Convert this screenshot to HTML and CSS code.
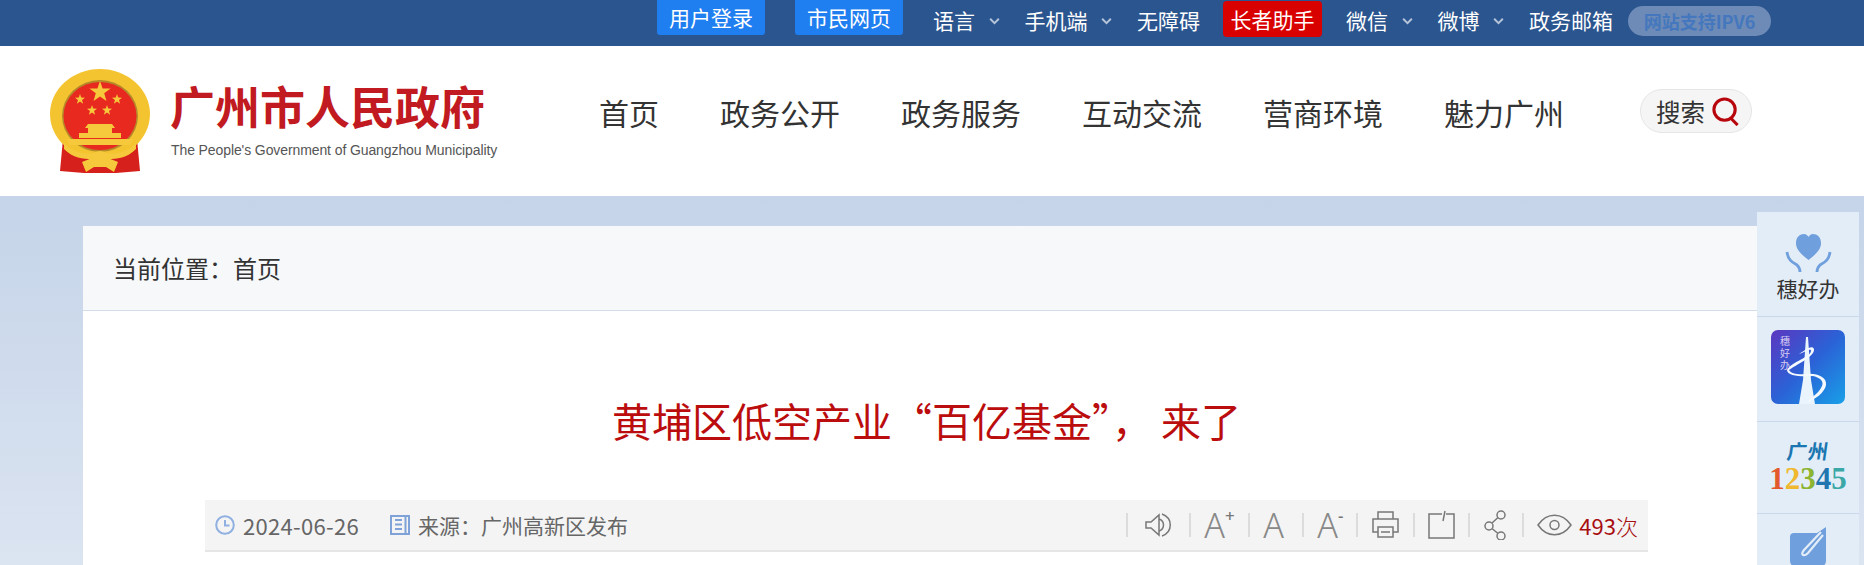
FILE: index.html
```html
<!DOCTYPE html>
<html lang="zh-CN">

<head>
    <meta charset="UTF-8">
    <title>黄埔区低空产业“百亿基金”，来了</title>
    <link rel="stylesheet" href="styles.css">
</head>

<body>
    <div class="topbar">
        <a class="top-btn">用户登录</a>
        <a class="top-btn">市民网页</a>
        <a class="top-link has-caret">语言<svg class="caret" viewBox="0 0 12 8"><path d="M2 1.5 6 5.5 10 1.5"/></svg></a>
        <a class="top-link has-caret">手机端<svg class="caret" viewBox="0 0 12 8"><path d="M2 1.5 6 5.5 10 1.5"/></svg></a>
        <a class="top-link">无障碍</a>
        <a class="top-help">长者助手</a>
        <a class="top-link has-caret">微信<svg class="caret" viewBox="0 0 12 8"><path d="M2 1.5 6 5.5 10 1.5"/></svg></a>
        <a class="top-link has-caret">微博<svg class="caret" viewBox="0 0 12 8"><path d="M2 1.5 6 5.5 10 1.5"/></svg></a>
        <a class="top-link">政务邮箱</a>
        <span class="top-pill">网站支持IPV6</span>
    </div>

    <header class="header">
        <div class="logo">
            <svg class="emblem" viewBox="0 0 100 105">
                <path class="ribbon" d="M13 70 L30 84 L42 90 L58 90 L70 84 L87 70 L90 102 L66 104 L34 104 L10 102Z"/>
                <ellipse class="ring" cx="50" cy="45" rx="50" ry="45"/>
                <ellipse class="ring-line" cx="50" cy="47" rx="38" ry="36"/>
                <ellipse class="disc" cx="50" cy="47" rx="36.500" ry="34"/>
                <g class="gold">
                    <path d="M50 12 52.6 19.4 60.5 19.6 54.2 24.3 56.5 31.9 50 27.4 43.5 31.9 45.8 24.3 39.5 19.6 47.4 19.4Z"/>
                    <path d="M30 25 31.2 28.6 35 28.7 32 31 33.1 34.7 30 32.5 26.9 34.7 28 31 25 28.7 28.8 28.6Z"/>
                    <path d="M67 25 68.2 28.6 72 28.7 69 31 70.1 34.7 67 32.5 63.9 34.7 65 31 62 28.7 65.8 28.6Z"/>
                    <path d="M42 36 43.2 39.6 47 39.7 44 42 45.1 45.7 42 43.5 38.9 45.7 40 42 37 39.7 40.8 39.6Z"/>
                    <path d="M57 36 58.2 39.6 62 39.7 59 42 60.1 45.7 57 43.5 53.9 45.7 55 42 52 39.7 55.8 39.6Z"/>
                    <path d="M38 55H62L65 59H62V64H71V69H29V64H38V59H35Z"/>
                    <path d="M17 70H83L80 76H20Z"/>
                    <path d="M14 74C28 88 40 84 50 84C60 84 72 88 86 74L86 80C74 92 60 90 50 90C40 90 26 92 14 80Z"/>
                    <path d="M50 82C56 82 59 86 58 89L68 93 64 103 56 98H44L36 103 32 93 42 89C41 86 44 82 50 82Z"/>
                </g>
            </svg>
            <div class="logo-text">
                <div class="logo-cn">广州市人民政府</div>
                <div class="logo-en">The People's Government of Guangzhou Municipality</div>
            </div>
        </div>
        <nav class="nav">
            <a>首页</a>
            <a>政务公开</a>
            <a>政务服务</a>
            <a>互动交流</a>
            <a>营商环境</a>
            <a>魅力广州</a>
        </nav>
        <div class="search">
            搜索
            <svg class="search-icon" viewBox="0 0 30 30"><circle cx="13.5" cy="13" r="11"/><path d="M20 22 27 29"/></svg>
        </div>
    </header>

    <main class="main">
        <div class="card">
            <div class="crumb">当前位置：首页</div>
            <article class="article">
                <h1 class="title">黄埔区低空产业“百亿基金”， 来了</h1>
                <div class="meta">
                    <div class="meta-left">
                        <svg class="meta-icon" viewBox="0 0 20 20"><circle cx="10" cy="10" r="8.8"/><path d="M10 5V10.5H14.5"/></svg>
                        <span class="meta-date">2024-06-26</span>
                        <svg class="meta-icon meta-doc" viewBox="0 0 20 20"><path d="M1 1H19V19H1Z"/><path d="M5 5H12M5 9.5H12M5 14H12M15.5 2V18"/></svg>
                        <span>来源：广州高新区发布</span>
                    </div>
                    <div class="tools">
                        <div class="tool">
                            <svg class="tool-icon w35" viewBox="0 0 35 30"><path d="M5 12H10L18 5V25L10 18H5Z"/><path d="M18 9C24 11 24 19 18 21"/><path d="M21 4C32 8 32 22 21 26"/></svg>
                        </div>
                        <div class="tool"><span class="tool-a tool-a-wide">A<sup>+</sup></span></div>
                        <div class="tool"><span class="tool-a">A</span></div>
                        <div class="tool"><span class="tool-a">A<sup>-</sup></span></div>
                        <div class="tool">
                            <svg class="tool-icon w29" viewBox="0 0 29 30"><path d="M7 9V2H22V9"/><path d="M7 22H2V9H27V22H22"/><path d="M7 17H22V27H7Z"/><path d="M10 22H19"/></svg>
                        </div>
                        <div class="tool">
                            <svg class="tool-icon w27" viewBox="0 0 27 30"><path d="M14 4H1V28H26V4H18"/><path d="M17 1 15 11"/></svg>
                        </div>
                        <div class="tool">
                            <svg class="tool-icon w26" viewBox="0 0 26 30"><circle cx="18" cy="5" r="4"/><circle cx="6" cy="16" r="4"/><circle cx="18" cy="26" r="4"/><path d="M15 7.5 9 13M9 18.5 15 23.5"/></svg>
                        </div>
                        <div class="tool tool-views">
                            <svg class="tool-icon w35" viewBox="0 0 35 22"><path d="M1 11C10 -2 25 -2 34 11C25 24 10 24 1 11Z"/><circle cx="17.5" cy="11" r="4.5"/></svg>
                            <span class="views">493<span class="views-unit">次</span></span>
                        </div>
                    </div>
                </div>
            </article>
        </div>
    </main>

    <!-- 右侧浮动栏 -->
    <aside class="side">
        <div class="side-item side-fav">
            <svg class="side-heart" viewBox="0 0 47 40"><path d="M23.5 27C17 22 11 17 11 10C11 4 15 1 19 1C21 1 23 2.500 23.500 4C24 2.500 26 1 28 1C32 1 36 4 36 10C36 17 30 22 23.500 27Z"/><path class="hand" d="M2 19C3 27 7 29 12 32C14 34 15 36 15 39"/><path class="hand" d="M45 19C44 27 40 29 35 32C33 34 32 36 32 39"/></svg>
            <span>穗好办</span>
        </div>
        <div class="side-item side-app">
            <svg class="side-tile" viewBox="0 0 74 74">
                <defs>
                    <linearGradient id="tile" x1="0" y1="0" x2="1" y2="1">
                        <stop offset="0" stop-color="#5b37c0"/>
                        <stop offset=".5" stop-color="#2b62d6"/>
                        <stop offset="1" stop-color="#18a0e8"/>
                    </linearGradient>
                </defs>
                <rect width="74" height="74" rx="7" fill="url(#tile)"/>
                <g class="tile-text">
                    <text x="14" y="15">穗</text>
                    <text x="14" y="27">好</text>
                    <text x="14" y="39">办</text>
                </g>
                <path class="tower" d="M35 7 37 7 40 50 44 74H28L32 50Z"/>
                <path class="swoosh" d="M18 40C30 32 44 26 43 19C41 14 33 21 28 24C36 21 40 18 40 21C40 27 20 32 16 40C16 46 30 47 42 46C50 48 54 52 50 58C47 64 40 67 36 72C44 70 54 62 55 55C56 47 46 43 36 44C28 45 20 44 18 40Z"/>
            </svg>
        </div>
        <div class="side-item side-hotline">
            <div class="hot-city">广州</div>
            <div class="hot-num"><span class="n1">1</span><span class="n2">2</span><span class="n3">3</span><span class="n4">4</span><span class="n5">5</span></div>
        </div>
        <div class="side-item side-edit">
            <svg class="side-pen" viewBox="0 0 36 37"><path class="pen-box" d="M4 4H27L36 -2V32Q36 37 31 37H5Q0 37 0 32V8Q0 4 4 4Z"/><path class="pen-line" d="M31 3 14 21Q11 25 13 26Q15 27 18 24L33 6"/></svg>
        </div>
    </aside>
</body></html>
```
FILE: styles.css
```css
html,
body {
    margin: 0;
    height: 565px;
    overflow: hidden;
}

body {
    position: relative;
    font-family: "Noto Sans CJK SC", "Noto Sans", sans-serif;
    color: #333;
    background: #c5d4e9;
}

a {
    color: inherit;
    text-decoration: none;
}

/* top bar */
.topbar {
    display: flex;
    align-items: flex-start;
    gap: 24px;
    height: 46px;
    padding-left: 657px;
    background: #2b558e;
    color: #fff;
    font-size: 21px;
}

.top-btn {
    width: 108px;
    margin-right: 6px;
    height: 35px;
    line-height: 35px;
    text-align: center;
    background: #1f7ef0;
    border-radius: 0 0 3px 3px;
}

.top-link {
    display: flex;
    align-items: center;
    height: 40px;
    line-height: 40px;
}

.has-caret {
    padding-right: 25.500px;
    position: relative;
}

.caret {
    position: absolute;
    right: 0;
    top: 17px;
    width: 13px;
    height: 9px;
    fill: none;
    stroke: #b5c4da;
    stroke-width: 1.8;
}

.top-help {
    width: 99px;
    height: 36px;
    margin-top: 1px;
    margin-left: -1px;
    line-height: 36px;
    text-align: center;
    background: #d90000;
    border-radius: 4px;
}

.top-pill {
    width: 143px;
    height: 30px;
    margin-top: 6px;
    margin-left: -9px;
    line-height: 30px;
    text-align: center;
    font-size: 18px;
    font-weight: 700;
    color: #4477bd;
    background: #6d8bb6;
    border-radius: 15px;
}

/* header */
.header {
    display: flex;
    align-items: center;
    height: 150px;
    background: #fff;
}

.logo {
    display: flex;
    width: 549px;
    padding-left: 50px;
    box-sizing: content-box;
}

.emblem {
    width: 100px;
    height: 105px;
    flex: none;
    filter: blur(.4px);
}

.ribbon {
    fill: #d6201c;
}

.ring {
    fill: #f4c430;
}

.ring-line {
    fill: #b5892a;
}

.disc {
    fill: #e8291f;
}

.gold {
    fill: #f6c93c;
}

.logo-text {
    margin-left: 20px;
    padding-top: 12px;
}

.logo-cn {
    height: 50px;
    line-height: 50px;
    font-size: 45px;
    font-weight: 700;
    color: #c11a20;
    white-space: nowrap;
}

.logo-en {
    margin-top: 9px;
    margin-left: 1px;
    font-family: "Liberation Sans", sans-serif;
    font-size: 14px;
    line-height: 20px;
    color: #555;
    white-space: nowrap;
    letter-spacing: -.1px;
}

.nav {
    display: flex;
    gap: 61px;
    padding-bottom: 18px;
    font-size: 30px;
    color: #333;
}

.search {
    display: flex;
    align-items: center;
    box-sizing: border-box;
    width: 112px;
    height: 44px;
    margin-left: 76px;
    margin-bottom: 20px;
    padding-left: 15px;
    font-size: 24.500px;
    background: #f5f5f5;
    border: 1px solid #e6e6e6;
    border-radius: 22px;
}

.search-icon {
    width: 30px;
    height: 29px;
    margin-left: 6px;
    fill: none;
    stroke: #b8060d;
    stroke-width: 3.200;
}

/* content */
.main {
    height: 369px;
    padding: 30px 0 0 83px;
    box-sizing: border-box;
    background: linear-gradient(#c5d4e9, #dbe4f1);
}

.card {
    width: 1687px;
    height: 339px;
    background: #fff;
}

.crumb {
    height: 84px;
    line-height: 84px;
    padding-left: 30px;
    font-size: 24px;
    color: #333;
    background: #f6f8fa;
    border-bottom: 1px solid #d3deea;
}

.article {
    padding: 0 122px;
}

.title {
    margin: 0;
    padding: 84px 0 105px;
    height: 0;
    line-height: 50px;
    text-align: center;
    font-size: 40px;
    font-weight: 400;
    color: #bb0d0d;
    white-space: nowrap;
}

.meta {
    display: flex;
    justify-content: space-between;
    align-items: center;
    height: 52px;
    box-sizing: border-box;
    padding: 0 10px;
    background: #f4f4f4;
    border-bottom: 2px solid #e6e6e6;
    font-size: 21px;
    color: #666;
}

.meta-left {
    display: flex;
    align-items: center;
}

.meta-icon {
    width: 20px;
    height: 20px;
    fill: none;
    stroke: #8fb0e0;
    stroke-width: 2;
}

.meta-date {
    margin: 0 31px 0 8px;
    font-size: 22px;
    letter-spacing: .3px;
}

.meta-doc {
    margin-right: 8px;
    stroke: #7fa3d8;
}

.tools {
    display: flex;
    align-items: center;
}

.tool {
    display: flex;
    align-items: center;
    justify-content: center;
    height: 24px;
    padding: 0 13px;
    border-left: 2px solid #dcdcdc;
}

.tool-icon {
    height: 30px;
    fill: none;
    stroke: #777;
    stroke-width: 1.500;
    margin: -3px 0;
}

.w35 {
    width: 35px;
}

.w29 {
    width: 29px;
}

.w27 {
    width: 27px;
}

.w26 {
    width: 26px;
}

.tool-a {
    display: block;
    width: 26px;
    font-family: "Noto Sans", sans-serif;
    font-size: 34px;
    font-weight: 300;
    line-height: 24px;
    color: #888;
    white-space: nowrap;
}

.tool-a-wide {
    width: 31px;
}

.tool-a sup {
    position: absolute;
    margin-top: -3px;
    font-size: 17px;
    line-height: 12px;
    vertical-align: baseline;
    font-weight: 500;
    color: #777;
}

.tool-views {
    padding-right: 0;
}

.tool-views .tool-icon {
    height: 22px;
    margin: 0 7px 0 0;
}

.views {
    color: #a80d10;
    font-size: 22px;
}

.views-unit {
    font-weight: 300;
}

/* floating column on the right */
.side {
    position: absolute;
    top: 212px;
    left: 1757px;
    width: 102px;
    height: 353px;
    overflow: hidden;
    background: #e3edf8;
}

.side-item {
    display: flex;
    flex-direction: column;
    align-items: center;
    justify-content: center;
    box-sizing: border-box;
    border-bottom: 1px solid #c9d8ea;
}

.side-fav {
    height: 105px;
    padding-top: 8px;
    font-size: 21px;
    line-height: 30px;
    color: #333;
}

.side-heart {
    width: 47px;
    height: 40px;
    fill: #6f9fdc;
}

.hand {
    fill: none;
    stroke: #6f9fdc;
    stroke-width: 2.800;
}

.side-app {
    height: 105px;
    padding-bottom: 4px;
}

.side-tile {
    width: 74px;
    height: 74px;
}

.tile-text {
    fill: #d9ccf5;
    font-size: 10px;
    text-anchor: middle;
}

.tower {
    fill: #e9f4fd;
}

.swoosh {
    fill: #f4f9ff;
}

.side-hotline {
    height: 92px;
}

.hot-city {
    margin-top: -4px;
    margin-bottom: 2px;
    font-size: 20px;
    line-height: 24px;
    font-weight: 700;
    letter-spacing: 1px;
    color: #1a76b0;
    transform: skewX(-8deg);
}

.hot-num {
    font-family: "Liberation Serif", serif;
    font-size: 31px;
    font-weight: 700;
    line-height: 28px;
}

.n1 {
    color: #e2592c;
}

.n2 {
    color: #efb82e;
}

.n3 {
    color: #8cb431;
}

.n4 {
    color: #2176b0;
}

.n5 {
    color: #3aa8a6;
}

.side-edit {
    height: 60px;
    justify-content: flex-start;
    padding-top: 15px;
    border-bottom: 0;
}

.side-pen {
    width: 36px;
    height: 37px;
    overflow: visible;
}

.pen-box {
    fill: #6f9fdc;
}

.pen-line {
    fill: none;
    stroke: #e3edf8;
    stroke-width: 2.200;
}
```
